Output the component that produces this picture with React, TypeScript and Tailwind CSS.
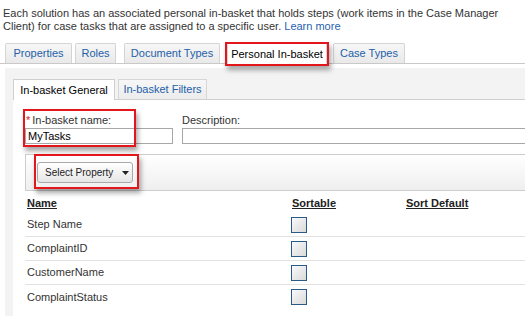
import React from "react";

function RedBox({ className }: { className: string }) {
  return (
    <span
      className={
        "pointer-events-none absolute border-2 border-[#e3161b] shadow-[2px_4px_5px_rgba(0,0,0,0.35)] " +
        className
      }
    />
  );
}

function Checkbox() {
  return (
    <span className="block h-[16px] w-[16px] border-[1.5px] border-[#2a5a8c] bg-gradient-to-br from-[#fafafa] to-[#d9d9d9]" />
  );
}

export default function App() {
  const rows = ["Step Name", "ComplaintID", "CustomerName", "ComplaintStatus"];
  return (
    <div className="h-[316px] w-[525px] overflow-hidden bg-white font-['Liberation_Sans',Arial,sans-serif] text-[11px] text-[#333]">
      <p className="px-[3px] pt-[7px] leading-[13px]">
        Each solution has an associated personal in-basket that holds steps (work items in the Case Manager
        <br />
        Client) for case tasks that are assigned to a specific user.{" "}
        <span className="text-[#1f5fae]">Learn more</span>
      </p>

      {/* main tabs */}
      <div className="mt-[10px] flex h-[21px] items-end border-b border-[#c9c9c9] pl-[5px] text-[#2360a8]">
        <div className="flex h-[20px] w-[67px] items-center justify-center rounded-t-[2px] border border-b-0 border-[#d4d4d4] bg-gradient-to-b from-[#f7f7f7] to-[#e9e9e9]">
          Properties
        </div>
        <div className="ml-[3px] flex h-[20px] w-[41px] items-center justify-center rounded-t-[2px] border border-b-0 border-[#d4d4d4] bg-gradient-to-b from-[#f7f7f7] to-[#e9e9e9]">
          Roles
        </div>
        <div className="ml-[8px] flex h-[20px] w-[96px] items-center justify-center rounded-t-[2px] border border-b-0 border-[#d4d4d4] bg-gradient-to-b from-[#f7f7f7] to-[#e9e9e9]">
          Document Types
        </div>
        <div className="relative ml-[7px] mb-[-1px] flex h-[21px] w-[100px] items-center justify-center rounded-t-[2px] border border-b-0 border-[#d4d4d4] bg-white text-black">
          Personal In-basket
          <RedBox className="left-[-3px] top-[-2px] h-[24px] w-[104px]" />
        </div>
        <div className="ml-[6px] flex h-[20px] w-[72px] items-center justify-center rounded-t-[2px] border border-b-0 border-[#d4d4d4] bg-gradient-to-b from-[#f7f7f7] to-[#e9e9e9]">
          Case Types
        </div>
      </div>

      {/* panel */}
      <div className="ml-[5px] mt-[4px] h-[260px] bg-[#f3f3f4] pl-[8px] pt-[12px]">
        {/* inner tabs */}
        <div className="flex h-[20px] items-end border-b border-[#cfcfcf]">
          <div className="mb-[-1px] flex h-[21px] w-[102px] items-center justify-center border border-b-0 border-[#cfcfcf] bg-white text-black">
            In-basket General
          </div>
          <div className="ml-[3px] flex h-[20px] w-[89px] items-center justify-center border border-b-0 border-[#d6d6d6] bg-gradient-to-b from-[#f7f7f7] to-[#ececec] text-[#2360a8]">
            In-basket Filters
          </div>
        </div>

        {/* content */}
        <div className="h-[240px] bg-white pl-[12px] pt-[14px]">
          <div className="relative flex gap-[9px]">
            <div className="w-[148px]">
              <div className="flex h-[12px] items-center leading-[12px]">
                <span className="ml-[1px] mr-[2px] text-[#d32020]">*</span>
                <span>In-basket name:</span>
              </div>
              <div className="mt-[2px] flex h-[16px] items-center border border-[#a8a8a8] pl-[2px] text-black">
                MyTasks
              </div>
            </div>
            <div className="flex-1">
              <div className="flex h-[12px] items-center leading-[12px]">Description:</div>
              <div className="mt-[2px] h-[16px] border border-r-0 border-[#a8a8a8]" />
            </div>
            <RedBox className="left-[-2px] top-[-5px] h-[38px] w-[113px]" />
          </div>

          {/* toolbar */}
          <div className="relative mt-[10px] flex h-[37px] items-center border border-r-0 border-[#cdcdcd] bg-gradient-to-b from-[#ffffff] to-[#efefef] pl-[11px]">
            <div className="flex h-[21px] w-[96px] items-center whitespace-nowrap rounded-[3px] border border-[#a9a9a9] bg-gradient-to-b from-[#ffffff] to-[#e6e6e6] pl-[7px] text-[10px] text-[#222]">
              <span>Select Property</span>
              <svg className="ml-[9px] shrink-0" width="7" height="4" viewBox="0 0 7 4">
                <path d="M0 0h7L3.5 4z" fill="#222" />
              </svg>
            </div>
            <RedBox className="left-[8px] top-[-1px] h-[35px] w-[105px]" />
          </div>

          {/* table */}
          <div className="mt-[2px] pr-0">
            <div className="grid h-[20px] grid-cols-[266px_115px_1fr] items-center font-bold text-[#222]">
              <span className="pl-[2px] underline">Name</span>
              <span className="pl-[1px] underline">Sortable</span>
              <span className="underline">Sort Default</span>
            </div>
            {rows.map((r, i) => (
              <div
                key={r}
                className={
                  "grid h-[24px] grid-cols-[266px_115px_1fr] items-center text-[#333] " +
                  (i < rows.length - 1 ? "border-b border-[#e2e2e2]" : "")
                }
              >
                <span className="pl-[2px]">{r}</span>
                <span>
                  <Checkbox />
                </span>
                <span />
              </div>
            ))}
          </div>
        </div>
      </div>
    </div>
  );
}
